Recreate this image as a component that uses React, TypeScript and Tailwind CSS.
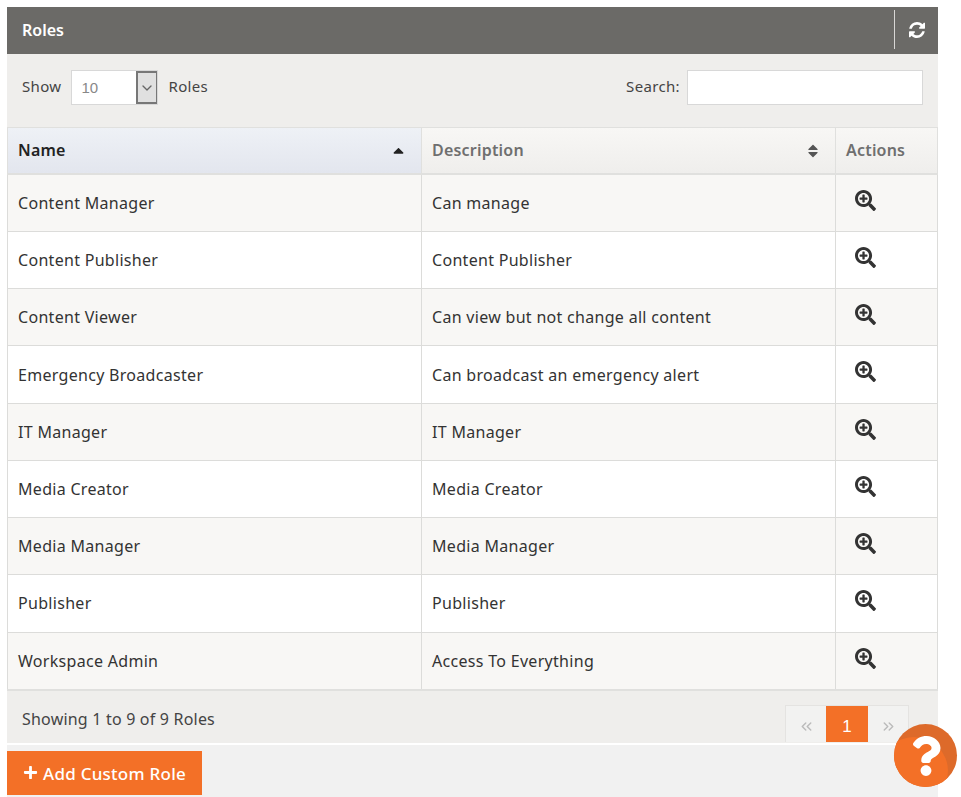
import { FaCaretDown, FaCaretUp, FaPlus, FaQuestion, FaSearchPlus } from "react-icons/fa";
import { FiChevronDown, FiChevronsLeft, FiChevronsRight } from "react-icons/fi";

const roles = [
  ["Content Manager", "Can manage"],
  ["Content Publisher", "Content Publisher"],
  ["Content Viewer", "Can view but not change all content"],
  ["Emergency Broadcaster", "Can broadcast an emergency alert"],
  ["IT Manager", "IT Manager"],
  ["Media Creator", "Media Creator"],
  ["Media Manager", "Media Manager"],
  ["Publisher", "Publisher"],
  ["Workspace Admin", "Access To Everything"],
];

function RefreshIcon() {
  return (
    <svg viewBox="0 0 1536 1536" className="h-[16px] w-[16px]" fill="currentColor">
      <path d="M1511 928q0 5-1 7-64 268-268 434.5t-478 166.5q-146 0-282.5-55t-243.5-157l-129 129q-19 19-45 19t-45-19-19-45v-448q0-26 19-45t45-19h448q26 0 45 19t19 45-19 45l-137 137q71 66 161 102t187 36q134 0 250-65t186-179q11-17 53-117 8-23 30-23h192q13 0 22.5 9.5t9.5 22.5zm25-800v448q0 26-19 45t-45 19h-448q-26 0-45-19t-19-45 19-45l138-138q-148-137-349-137-134 0-250 65t-186 179q-11 17-53 117-8 23-30 23h-199q-13 0-22.5-9.5t-9.5-22.5v-7q65-268 270-434.5t480-166.5q146 0 284 55.5t245 156.5l130-129q19-19 45-19t45 19 19 45z" />
    </svg>
  );
}

function HelpBadge() {
  return (
    <div className="absolute left-[894px] top-[724px] flex h-[63px] w-[63px] items-center justify-center overflow-hidden rounded-full bg-[#dd6a2a]">
      <div className="absolute left-[-14px] top-[13px] h-[68px] w-[68px] rounded-full bg-[#f37027]" />
      <FaQuestion className="relative h-[40px] w-[40px] text-white" />
    </div>
  );
}

export default function App() {
  return (
    <div className="relative h-[797px] w-[961px] overflow-hidden bg-white font-['Noto_Sans',sans-serif] text-[#333]">
      <div className="ml-[7px] w-[931px] pt-[7px]">
        {/* panel header */}
        <div className="flex h-[47px] items-center justify-between bg-[#6b6a67] pl-[15px] text-white">
          <span className="mt-[-2px] text-[16px] font-semibold">Roles</span>
          <div className="mt-[3px] flex h-[39px] w-[44px] items-center justify-center self-start border-l border-[#d8d7d5]">
            <RefreshIcon />
          </div>
        </div>

        {/* toolbar */}
        <div className="flex h-[73px] items-start justify-between bg-[#efeeec] px-[15px] pt-[16px] text-[15px] tracking-[0.35px] text-[#444]">
          <div className="flex h-[35px] items-center">
            <span className="mt-[-2px]">Show</span>
            <div className="ml-[10px] flex h-[35px] w-[87px] border border-[#d8d8d8] bg-white">
              <span className="flex-1 pl-[9px] pt-[7px] font-['Liberation_Sans',sans-serif] text-[15px] leading-[20px] tracking-normal text-[#888]">10</span>
              <div className="flex w-[21px] items-center justify-center border-2 border-r-[1px] border-[#777] bg-[#e0e0e0]">
                <FiChevronDown className="h-[16px] w-[16px] text-[#666]" />
              </div>
            </div>
            <span className="ml-[10px] mt-[-2px]">Roles</span>
          </div>
          <div className="flex h-[35px] items-center">
            <span className="mt-[-2px]">Search:</span>
            <input className="ml-[7px] h-[35px] w-[236px] border border-[#d8d8d8] bg-white" />
          </div>
        </div>

        {/* table head */}
        <div className="flex h-[47px] border-y border-[#e0e0de] text-[16px] font-semibold tracking-[0.2px]">
          <div className="flex w-[415px] items-center justify-between border-x border-[#e0e0de] bg-gradient-to-b from-[#eef1f6] to-[#e3e6ee] pl-[10px] pr-[14px] text-[#222]">
            <span className="mt-[-2px]">Name</span>
            <FaCaretUp className="h-[17px] w-[17px] text-[#222]" />
          </div>
          <div className="flex w-[414px] items-center justify-between border-r border-[#e0e0de] bg-gradient-to-b from-[#f8f7f5] to-[#efeeec] pl-[10px] pr-[14px] text-[#6f6f6f]">
            <span className="mt-[-2px]">Description</span>
            <div className="flex flex-col text-[#555]">
              <FaCaretUp className="mb-[-9px] h-[16px] w-[16px]" />
              <FaCaretDown className="h-[16px] w-[16px]" />
            </div>
          </div>
          <div className="flex flex-1 items-center border-r border-[#e0e0de] bg-gradient-to-b from-[#f8f7f5] to-[#efeeec] pl-[10px] text-[#6f6f6f]">
            <span className="mt-[-2px]">Actions</span>
          </div>
        </div>

        {/* rows */}
        <div className="mt-[-1.2px] border-t-2 border-[#e0e0de]">
          {roles.map(([name, description], i) => (
            <div
              key={name}
              className={`flex h-[57.22px] border-b border-[#dcdcda] text-[16px] tracking-[0.3px] ${i % 2 === 0 ? "bg-[#f8f7f5]" : "bg-white"}`}
            >
              <div className="flex w-[415px] items-center border-x border-[#dcdcda] pl-[10px]">{name}</div>
              <div className="flex w-[414px] items-center border-r border-[#dcdcda] pl-[10px]">{description}</div>
              <div className="flex flex-1 border-r border-[#dcdcda] pl-[19px] pt-[15px]">
                <FaSearchPlus className="h-[21px] w-[21px] text-[#333]" />
              </div>
            </div>
          ))}
        </div>

        {/* footer */}
        <div className="mt-[-1px] flex h-[54px] items-start justify-between border-t-2 border-[#e0e0de] bg-[#efeeec] pl-[15px] pr-[29px]">
          <span className="pt-[16px] text-[16px] tracking-[0.2px] text-[#444]">Showing 1 to 9 of 9 Roles</span>
          <div className="mt-[14px] flex h-[37px] border-x border-t border-[#e4e3e1] bg-[#f2f2f1]">
            <div className="flex w-[40px] items-center justify-center pt-[6px]">
              <FiChevronsLeft className="h-[17px] w-[17px] text-[#bbb]" />
            </div>
            <div className="flex w-[42px] items-center justify-center bg-[#f37027] pt-[5px] font-['Liberation_Sans',sans-serif] text-[17px] text-white">1</div>
            <div className="flex w-[40px] items-center justify-center pt-[6px]">
              <FiChevronsRight className="h-[17px] w-[17px] text-[#bbb]" />
            </div>
          </div>
        </div>

        {/* bottom bar */}
        <div className="mt-[2px] h-[52px] bg-[#f1f1f1] pt-[6px]">
          <button className="flex h-[44px] w-[195px] items-center justify-center gap-[5px] bg-[#f37027] text-[17px] font-medium tracking-[0.25px] text-white">
            <FaPlus className="h-[15px] w-[15px]" />
            <span className="mt-[1px]">Add Custom Role</span>
          </button>
        </div>
      </div>
      <HelpBadge />
    </div>
  );
}
